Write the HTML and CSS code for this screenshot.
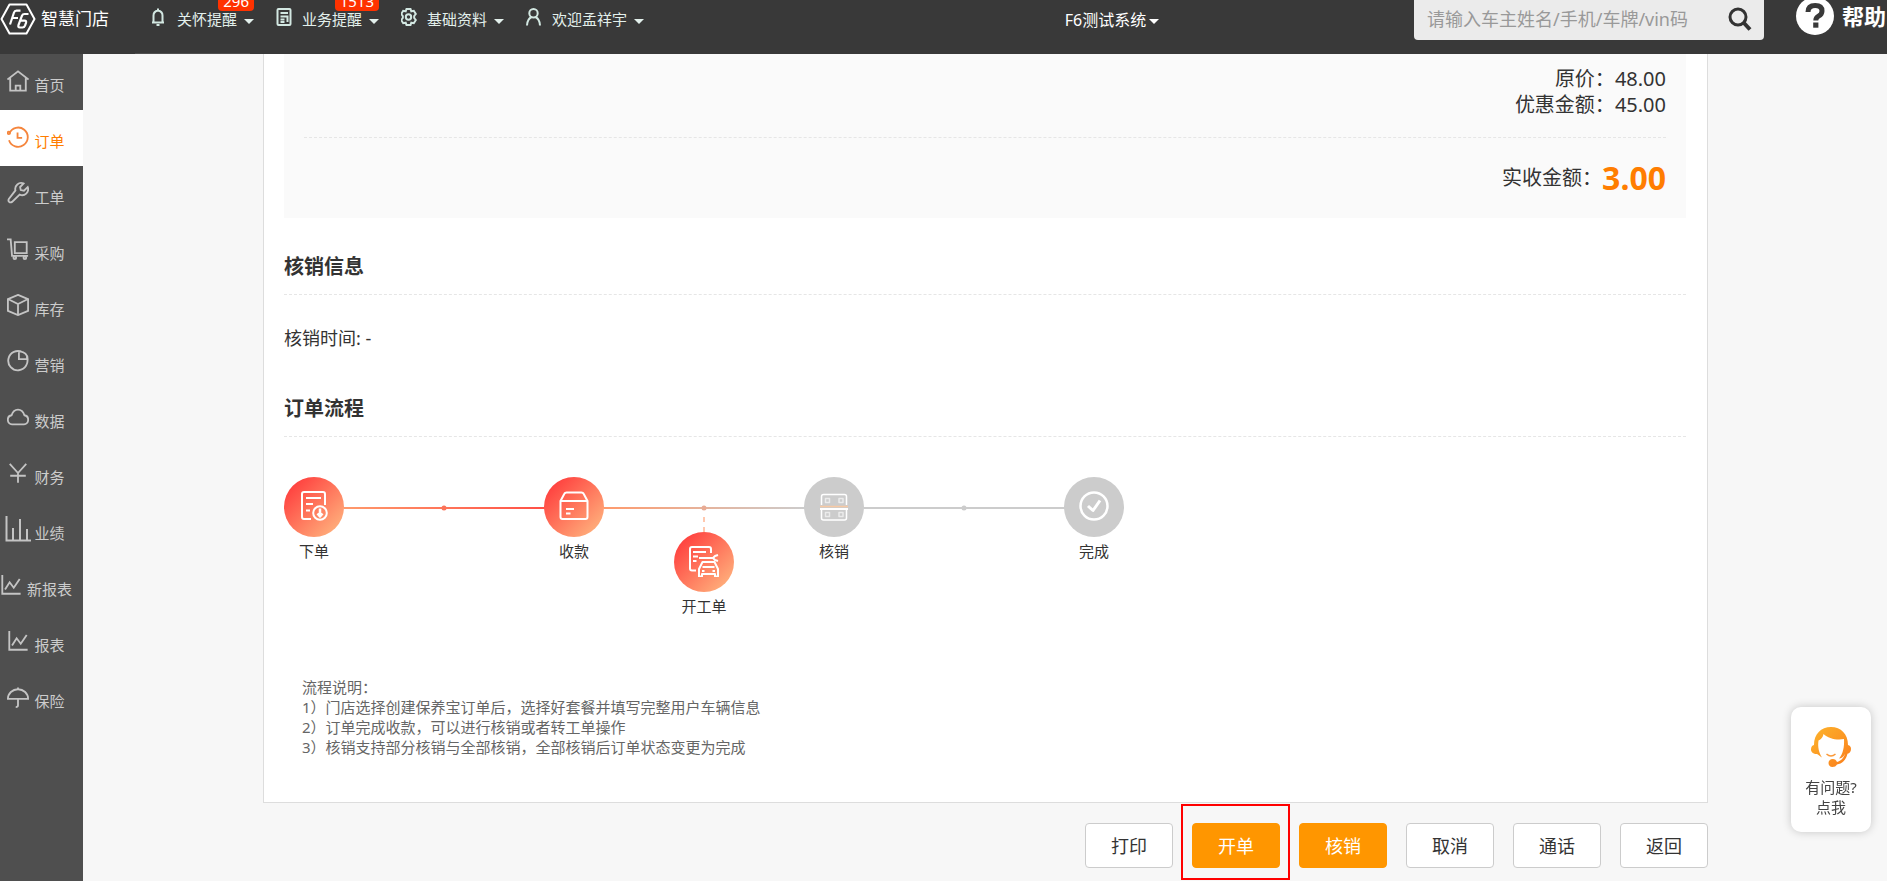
FILE: index.html
```html
<!DOCTYPE html>
<html lang="zh-CN">
<head>
<meta charset="utf-8">
<title>智慧门店 - 订单</title>
<link rel="stylesheet" href="styles.css">
</head>
<body>
<header class="topbar">
  <a class="brand" href="#" aria-label="智慧门店">
    <svg class="brand-mark" viewBox="0 0 36 32" width="36" height="32" fill="none" stroke="#fff" stroke-linejoin="round">
      <path d="M9.500 1.500h17L34.500 16l-8 14.500h-17L1.500 16z" stroke-width="2"/>
      <path d="M10 21.500L14 9.500q.6-1.800 2.500-1.800h4M12 15h6" stroke-width="2.200"/>
      <path d="M28.500 11h-4q-1.800 0-2.500 1.700l-3.500 9.300q-.8 2.500 1.500 2.500h2.500q1.800 0 2.500-1.800l1-2.800q.7-2.300-1.500-2.300h-3.500" stroke-width="2.200"/>
    </svg>
    <span class="brand-name">智慧门店</span>
  </a>
  <nav class="topnav">
    <button class="topnav-item">
      <svg class="nav-icon" viewBox="0 0 16 18"><path d="M1 14.500h12M2.500 14V7.500q0-4 4.500-5 4.500 1 4.500 5V14M7 2.500V.5M5.500 17h3"/></svg>
      <span>关怀提醒</span><i class="caret"></i><b class="badge">296</b>
    </button>
    <button class="topnav-item">
      <svg class="nav-icon" viewBox="0 0 16 18"><rect x="1.500" y="1" width="13" height="16" rx="1"/><path d="M4.500 5h7.500M4.500 8.500h7v5.500M4.500 11.500h4M4.500 14h4"/></svg>
      <span>业务提醒</span><i class="caret"></i><b class="badge">1513</b>
    </button>
    <button class="topnav-item">
      <svg class="nav-icon" viewBox="0 0 16 18"><path d="M5.500 1h4l.8 2.300 2.500-.5 2 3.200L13.200 8v2l1.600 2-2 3.200-2.500-.5-.8 2.300h-4l-.8-2.300-2.500.5-2-3.200 1.600-2V8L.2 6l2-3.200 2.500.5z"/><circle cx="7.500" cy="9" r="2.700"/></svg>
      <span>基础资料</span><i class="caret"></i>
    </button>
    <button class="topnav-item">
      <svg class="nav-icon" viewBox="0 0 16 18"><circle cx="7.500" cy="5.200" r="4.200"/><path d="M1 17.500q.3-6.500 4.500-8.500M14 17.500q-.3-6.500-4.500-8.500"/></svg>
      <span>欢迎孟祥宇</span><i class="caret"></i>
    </button>
  </nav>
  <button class="shop">F6测试系统<i class="caret"></i></button>
  <form class="search">
    <input class="search-input" type="text" aria-label="搜索" placeholder="请输入车主姓名/手机/车牌/vin码">
    <button class="search-btn" type="button" aria-label="搜索">
      <svg viewBox="0 0 24 24" width="24" height="24" fill="none" stroke="#333" stroke-width="3"><circle cx="10" cy="10" r="8"/><path d="M15.500 15.500l6.500 7" stroke-width="4"/></svg>
    </button>
  </form>
  <a class="help" href="#">
    <svg viewBox="0 0 38 38" width="38" height="38"><circle cx="19" cy="19" r="19" fill="#fff"/><path d="M12 15q0-6.500 7.200-6.500 6.800 0 6.800 5.500 0 3.200-3.500 5.200-2.700 1.500-2.700 4.300" fill="none" stroke="#393939" stroke-width="5"/><rect x="17.200" y="25.500" width="5.200" height="5.200" fill="#393939"/></svg>
    <span>帮助</span>
  </a>
</header>
<div class="shell">
  <nav class="sidebar">
    <a class="side-item" href="#"><svg class="side-icon" viewBox="0 0 24 24"><path d="M.5 10.500L12 1.500l11.500 9M3.500 9v13.500h17V9M9.500 22v-5h5v5"/></svg><span>首页</span></a>
    <a class="side-item active" href="#"><svg class="side-icon" viewBox="0 0 24 24"><path d="M2.500 8a10.500 10.500 0 1 1-.3 7.500M11.500 7v6h5"/><circle cx="2" cy="7.500" r="1.300"/></svg><span>订单</span></a>
    <a class="side-item" href="#"><svg class="side-icon" viewBox="0 0 24 24"><path d="M18 1.600a6.500 6.500 0 0 0-8.800 7.600L2 18.500q-1 2 .4 3.200 1.400 1 3.100 0l8.300-7.900a6.500 6.500 0 0 0 8.800-8.200L18.500 9.500l-3.500-.7-.7-3.300z"/></svg><span>工单</span></a>
    <a class="side-item" href="#"><svg class="side-icon" viewBox="0 0 24 24"><path d="M0 1.500h4l1.500 18H23M8.500 4.500h13v12h-13z"/><circle cx="8.500" cy="21.500" r="1.500"/><circle cx="19.500" cy="21.500" r="1.500"/></svg><span>采购</span></a>
    <a class="side-item" href="#"><svg class="side-icon" viewBox="0 0 24 24"><path d="M12 1l11 4.500v13L12 23 1 18.500v-13zM1 5.500L12 11l11-5.500M12 11v12"/></svg><span>库存</span></a>
    <a class="side-item" href="#"><svg class="side-icon" viewBox="0 0 24 24"><path d="M17 2.500A10.500 10.500 0 1 0 21.500 7.500M13 1.500V10h9.500q-.2-8-9.500-8.500z"/></svg><span>营销</span></a>
    <a class="side-item" href="#"><svg class="side-icon" viewBox="0 0 24 24"><path d="M5.500 20a5 5 0 0 1-.5-9.900Q7 4 12 4t7 6.100a5 5 0 0 1-.5 9.900z"/></svg><span>数据</span></a>
    <a class="side-item" href="#"><svg class="side-icon" viewBox="0 0 24 24"><path d="M3 2l9 10 9-10M12 12v10.500M3.500 15h17"/></svg><span>财务</span></a>
    <a class="side-item" href="#"><svg class="side-icon large" viewBox="0 0 26 26"><path d="M1.500 0v24.500H26M8 12v12M15 3v21M22 13v11"/></svg><span>业绩</span></a>
    <a class="side-item" href="#"><svg class="side-icon" viewBox="0 0 24 24"><path d="M2.500 1v20.500h20M5.500 17l5-8 4.500 6 6.500-9.500"/></svg><span>新报表</span></a>
    <a class="side-item" href="#"><svg class="side-icon" viewBox="0 0 24 24"><path d="M2.500 1v20.500h20M5.500 17l5-8 4.500 6 6.500-9.500"/></svg><span>报表</span></a>
    <a class="side-item" href="#"><svg class="side-icon" viewBox="0 0 24 24"><path d="M1 14a11 10.500 0 0 1 22 0zM12 1.500v2M12 14v7q0 2-2.500 2"/></svg><span>保险</span></a>
  </nav>
  <main class="main">
    <section class="card">
      <div class="summary">
        <div class="price"><span>原价：</span><span>48.00</span></div>
        <div class="price"><span>优惠金额：</span><span>45.00</span></div>
        <div class="total"><span>实收金额：</span><strong>3.00</strong></div>
      </div>
      <h2 class="title">核销信息</h2>
      <p class="verify">核销时间: -</p>
      <h2 class="title">订单流程</h2>
      <div class="flow">
        <div class="step">
          <span class="node on"><svg viewBox="0 0 32 32"><path d="M13 29H6q-2 0-2-2V4q0-2 2-2h19q2 0 2 2v11M8 8h15M8 14h7M8 20.500h4"/><circle cx="22" cy="23" r="6.800"/><path d="M22 18.500v6.500M19.500 23.500l2.500 3 2.500-3" stroke-width="2.500"/></svg></span>
          <span class="label">下单</span>
        </div>
        <div class="link warm"><i class="line"></i></div>
        <div class="step">
          <span class="node on"><svg viewBox="0 0 32 32"><path d="M2.500 10.500V27q0 2 2 2h23q2 0 2-2V10.500M2.500 11h27L25.500 3.500q-.5-1-2-1h-15q-1.500 0-2 1zM8 19h8M8 23.500h4.500"/></svg></span>
          <span class="label">收款</span>
        </div>
        <div class="link fade">
          <i class="line"></i><i class="stem"></i>
          <div class="step">
            <span class="node on"><svg viewBox="0 0 32 32"><path d="M8 25.500H4q-2 0-2-2V4q0-2 2-2h17q2 0 2 2v4M5 7h13M5 11.500h5M5 16h3.500M11 13h14M30 10l-3 1-2 2 2 2 3 1"/><path d="M11 31.500v-7.500l3.500-7h12l3.500 7v7.500h-3v-2.500H14v2.500zM14.500 22h12M14 26h2.500M24.500 26H27"/></svg></span>
            <span class="label">开工单</span>
          </div>
        </div>
        <div class="step">
          <span class="node"><svg viewBox="0 0 32 32"><path stroke-width="1.500" d="M3.500 15V6.500q0-2 2-2h21q2 0 2 2V15M3.500 20v8q0 2 2 2h21q2 0 2-2v-8"/><path stroke-width="1.500" opacity=".6" d="M7.500 8.500h4v4h-4zM21 8.500h4v4h-4zM7.500 22.500h4v4h-4zM21 22.500h4v4h-4z"/><path d="M2 19h28"/><path class="scan" d="M2 16.500h28"/></svg></span>
          <span class="label">核销</span>
        </div>
        <div class="link idle"><i class="line"></i></div>
        <div class="step">
          <span class="node"><svg viewBox="0 0 32 32"><circle cx="16" cy="16" r="13.500" stroke-width="2.500"/><path d="M10 16l5 4.500 7-10" stroke-width="3"/></svg></span>
          <span class="label">完成</span>
        </div>
      </div>
      <div class="notes">
        <p>流程说明：</p>
        <p>1）门店选择创建保养宝订单后，选择好套餐并填写完整用户车辆信息</p>
        <p>2）订单完成收款，可以进行核销或者转工单操作</p>
        <p>3）核销支持部分核销与全部核销，全部核销后订单状态变更为完成</p>
      </div>
    </section>
    <div class="actions">
      <button class="btn">打印</button>
      <button class="btn primary marked">开单</button>
      <button class="btn primary">核销</button>
      <button class="btn">取消</button>
      <button class="btn">通话</button>
      <button class="btn">返回</button>
    </div>
  </main>
</div>
<a class="service" href="#">
  <svg viewBox="0 0 40 40" width="40" height="40">
    <defs><linearGradient id="hair" x1="0" y1="0" x2="1" y2="1"><stop offset="0" stop-color="#fdb52c"/><stop offset="1" stop-color="#fa7d1c"/></linearGradient></defs>
    <path fill="url(#hair)" d="M3 18C3 7 10 0 20 0s17 7 17 18c2 .5 3 2 3 4 0 2.500-1.500 4.500-3.500 4.800C35 33 31 37 26 37.500c-1 1.700-2.500 2.500-4.500 2.500-2.600 0-4-1.700-4-4s1.600-4 4.300-4c2 0 3.500 1 4.200 3C30 34 33 30.500 34 27c-1.500 3-4 4.500-6 4.500C32 27 33.500 20 33 12c-7 1.500-16-.5-20.500-5C12 10 10 12.500 7.500 13.500 6.500 20 8 26 11 30.500 9.500 29.500 7.500 28 6 27 2 27 0 25 0 22.500 0 20 1 18.500 3 18z"/>
    <path d="M15.500 27q4.500 4 9 0" fill="none" stroke="#fb9a3a" stroke-width="1.500"/>
  </svg>
  <span>有问题?</span>
  <span>点我</span>
</a>
</body>
</html>
```
FILE: styles.css
```css
* { box-sizing: border-box; }

body {
  margin: 0;
  height: 100vh;
  overflow: hidden;
  display: flex;
  flex-direction: column;
  background: #f7f7f7;
  color: #333;
  font-family: "Noto Sans", "Noto Sans CJK SC", sans-serif;
  font-size: 15px;
  line-height: 20px;
}

a { color: inherit; text-decoration: none; }
button, input { font: inherit; color: inherit; }
button { border: 0; padding: 0; background: none; cursor: pointer; }
p, h2 { margin: 0; }

/* top bar */
.topbar {
  position: relative;
  flex: none;
  height: 54px;
  display: flex;
  align-items: flex-start;
  overflow: hidden;
  background: #393939;
  color: #fff;
}
.topbar::after {
  content: "";
  position: absolute;
  left: 135px;
  bottom: 0;
  width: 115px;
  height: 1px;
  background: #505050;
}
.brand {
  flex: none;
  width: 151px;
  display: flex;
  gap: 5px;
  padding-top: 3px;
}
.brand-name {
  font-size: 17px;
  line-height: 32px;
}
.topnav { flex: none; display: flex; gap: 22px; }
.topnav-item {
  position: relative;
  display: flex;
  align-items: center;
  height: 37px;
  color: #e3f0ec;
}
.nav-icon {
  width: 16px;
  height: 18px;
  margin: 0 10px 3px 0;
  fill: none;
  stroke: #d3e8e2;
  stroke-width: 2;
}
.caret {
  margin: 6px 0 0 7px;
  border: 5px solid transparent;
  border-top-color: currentColor;
  border-bottom: 0;
}
.badge {
  position: absolute;
  right: 0;
  top: -8px;
  padding: 0 5px;
  border-radius: 4px;
  background: #ff3200;
  color: #fff;
  font-weight: 400;
  line-height: 19px;
}
.shop {
  flex: auto;
  display: flex;
  justify-content: center;
  align-items: center;
  height: 40px;
  padding-right: 74px;
  padding-left: 240px;
  font-size: 16px;
}
.shop .caret { margin: 2px 0 0 3px; }
.search {
  flex: none;
  width: 350px;
  height: 40px;
  display: flex;
  align-items: center;
  background: #ebebeb;
  border-radius: 0 0 4px 4px;
}
.search-input {
  flex: 1;
  min-width: 0;
  height: 38px;
  padding: 0 0 2px 13px;
  border: 0;
  outline: 0;
  background: none;
  color: #333;
  font-size: 18px;
}
.search-input::placeholder { color: #999; }
.search-btn { width: 48px; height: 40px; }
.search-btn svg { display: block; margin: 0 auto 2px; }
.help {
  flex: none;
  width: 91px;
  margin-left: 32px;
  display: flex;
  gap: 8px;
  height: 32px;
  align-items: center;
  white-space: nowrap;
  font-size: 22px;
  font-weight: 700;
}
.help svg { flex: none; }

/* side bar */
.shell { flex: 1; min-height: 0; display: flex; }
.sidebar { flex: none; width: 83px; background: #4f4f4f; color: #ccc; }
.side-item {
  height: 56px;
  display: flex;
  align-items: center;
  justify-content: center;
  gap: 5px;
  padding: 5px 11px 0 0;
  white-space: nowrap;
}
.side-icon {
  flex: none;
  width: 22px;
  height: 22px;
  margin-bottom: 7px;
  fill: none;
  stroke: #c4c4c4;
  stroke-width: 2;
}
.side-icon.large { width: 26px; height: 26px; margin-left: -2px; margin-right: -2px; }
.side-item.active { background: #fff; color: #ff7d00; }
.side-item.active .side-icon { stroke: #f5853c; }

/* order card */
.main { flex: 1; min-width: 0; padding: 0 179px 0 180px; }
.card {
  padding: 0 21px 45px 20px;
  background: #fff;
  border: 1px solid #ddd;
  border-top: 0;
}
.summary { padding: 12px 20px 0; background: #fafafa; text-align: right; }
.price { font-size: 20px; line-height: 26px; }
.total {
  display: flex;
  align-items: center;
  justify-content: flex-end;
  height: 81px;
  margin-top: 19px;
  border-top: 1px dashed #e6e6e6;
  font-size: 20px;
}
.total strong { color: #ff7d00; font-size: 32px; }
.title {
  margin-top: 35px;
  padding-bottom: 13px;
  border-bottom: 1px dashed #e6e6e6;
  font-size: 20px;
  line-height: 28px;
}
.verify { margin: 31px 0 45px; font-size: 18px; line-height: 24px; }

/* process chart */
.flow { display: flex; margin-top: 40px; }
.step {
  flex: none;
  width: 60px;
  display: flex;
  flex-direction: column;
  align-items: center;
  gap: 4px;
}
.node {
  width: 60px;
  height: 60px;
  display: flex;
  align-items: center;
  justify-content: center;
  border-radius: 50%;
  background: #ccc;
}
.node.on { background: linear-gradient(135deg, #ff3d3d 10%, #ffb07c 90%); }
.node svg {
  width: 32px;
  height: 32px;
  margin-bottom: 2px;
  fill: none;
  stroke: #fff;
  stroke-width: 2;
  stroke-linejoin: round;
}
.node .scan { stroke: #f7c9a4; stroke-width: 1.5; }
.label { white-space: nowrap; }
.link {
  width: 200px;
  padding-top: 30px;
  display: flex;
  flex-direction: column;
  align-items: center;
}
.line { position: relative; width: 100%; height: 2px; }
.line::after {
  content: "";
  position: absolute;
  left: 50%;
  top: 50%;
  width: 5px;
  height: 5px;
  transform: translate(-50%, -50%);
  border-radius: 50%;
}
.warm .line { background: linear-gradient(90deg, #ff9a6c, #ff5046); }
.warm .line::after { background: #fb7359; }
.fade .line { background: linear-gradient(90deg, #ff9a6c, #ccc); }
.fade .line::after { background: #e8ab94; }
.idle .line, .idle .line::after { background: #ccc; }
.stem {
  width: 2px;
  height: 23px;
  background: repeating-linear-gradient(#fff 0 8px, #ffc8ae 8px 13px, #fff 13px 18px, #ffc8ae 18px 23px);
}
.notes { margin: 61px 0 0 18px; color: #666; }

/* page actions */
.actions { display: flex; justify-content: flex-end; gap: 19px; padding-top: 20px; }
.btn {
  position: relative;
  width: 88px;
  height: 45px;
  background: #fff;
  border: 1px solid #ccc;
  border-radius: 4px;
  font-size: 18px;
}
.btn.primary { background: #ff9600; border-color: #ff9600; color: #fff; }
.btn.marked::after {
  content: "";
  position: absolute;
  inset: -20px -11px -13px -12px;
  border: 2px solid #f00;
}

/* floating service entry */
.service {
  position: fixed;
  right: 16px;
  bottom: 49px;
  width: 80px;
  height: 125px;
  padding-top: 20px;
  display: flex;
  flex-direction: column;
  align-items: center;
  background: #fff;
  border-radius: 10px;
  box-shadow: 0 0 10px rgba(0, 0, 0, .2);
  color: #444;
}
.service svg { margin-bottom: 10px; }
```
